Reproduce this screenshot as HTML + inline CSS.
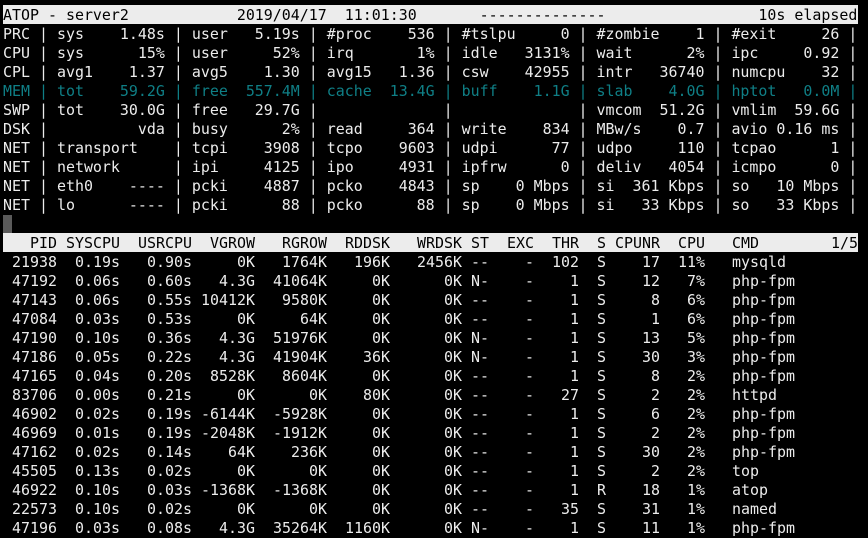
<!DOCTYPE html>
<html><head><meta charset="utf-8"><style>
html,body{margin:0;padding:0;background:#000;width:868px;height:538px;overflow:hidden}
body{position:relative;font-family:"DejaVu Sans Mono","Liberation Mono",monospace;font-size:14.95px;color:#ececec}
.l{position:absolute;left:3px;height:19px;line-height:19px;padding-top:1px;white-space:pre}
.bar{position:absolute;left:3px;width:855px;height:19px;background:#ececec}
.t{color:#0f7f86}
.r{position:absolute;left:0;width:868px;height:19px;line-height:19px}
.r i{font-style:normal;position:absolute;top:1px;white-space:pre}
.a{right:811px}.b{right:748px}.c{right:676px}.d{right:613px}.e{right:541px}.f{right:478px}.g{right:406px}
.h{left:471px}.j{right:334px}.k{right:289px}.m{left:597px}.n{right:208px}.o{right:163px}.p{left:732px}
.blk{color:#000}
</style></head><body>
<div class="bar" style="top:5px"></div>
<div class="l blk" style="top:5px">ATOP - server2            2019/04/17  11:01:30       --------------                 10s elapsed</div>
<div class="l" style="top:24px">PRC | sys    1.48s | user   5.19s | #proc    536 | #tslpu     0 | #zombie    1 | #exit     26 |</div>
<div class="l" style="top:43px">CPU | sys      15% | user     52% | irq       1% | idle   3131% | wait      2% | ipc     0.92 |</div>
<div class="l" style="top:62px">CPL | avg1    1.37 | avg5    1.30 | avg15   1.36 | csw    42955 | intr   36740 | numcpu    32 |</div>
<div class="l t" style="top:81px">MEM | tot    59.2G | free  557.4M | cache  13.4G | buff    1.1G | slab    4.0G | hptot   0.0M |</div>
<div class="l" style="top:100px">SWP | tot    30.0G | free   29.7G |              |              | vmcom  51.2G | vmlim  59.6G |</div>
<div class="l" style="top:119px">DSK |          vda | busy      2% | read     364 | write    834 | MBw/s    0.7 | avio 0.16 ms |</div>
<div class="l" style="top:138px">NET | transport    | tcpi    3908 | tcpo    9603 | udpi      77 | udpo     110 | tcpao      1 |</div>
<div class="l" style="top:157px">NET | network      | ipi     4125 | ipo     4931 | ipfrw      0 | deliv   4054 | icmpo      0 |</div>
<div class="l" style="top:176px">NET | eth0    ---- | pcki    4887 | pcko    4843 | sp    0 Mbps | si  361 Kbps | so   10 Mbps |</div>
<div class="l" style="top:195px">NET | lo      ---- | pcki      88 | pcko      88 | sp    0 Mbps | si   33 Kbps | so   33 Kbps |</div>
<div style="position:absolute;left:3px;top:215px;width:9px;height:18px;background:#5a5a5a"></div>
<div class="bar" style="top:233px"></div>
<div class="r blk" style="top:233px"><i class="a">PID</i><i class="b">SYSCPU</i><i class="c">USRCPU</i><i class="d">VGROW</i><i class="e">RGROW</i><i class="f">RDDSK</i><i class="g">WRDSK</i><i class="h">ST</i><i class="j">EXC</i><i class="k">THR</i><i class="m">S</i><i class="n">CPUNR</i><i class="o">CPU</i><i class="p">CMD</i><i style="right:10px">1/5</i></div>
<div class="r" style="top:252px"><i class="a">21938</i><i class="b">0.19s</i><i class="c">0.90s</i><i class="d">0K</i><i class="e">1764K</i><i class="f">196K</i><i class="g">2456K</i><i class="h">--</i><i class="j">-</i><i class="k">102</i><i class="m">S</i><i class="n">17</i><i class="o">11%</i><i class="p">mysqld</i></div>
<div class="r" style="top:271px"><i class="a">47192</i><i class="b">0.06s</i><i class="c">0.60s</i><i class="d">4.3G</i><i class="e">41064K</i><i class="f">0K</i><i class="g">0K</i><i class="h">N-</i><i class="j">-</i><i class="k">1</i><i class="m">S</i><i class="n">12</i><i class="o">7%</i><i class="p">php-fpm</i></div>
<div class="r" style="top:290px"><i class="a">47143</i><i class="b">0.06s</i><i class="c">0.55s</i><i class="d">10412K</i><i class="e">9580K</i><i class="f">0K</i><i class="g">0K</i><i class="h">--</i><i class="j">-</i><i class="k">1</i><i class="m">S</i><i class="n">8</i><i class="o">6%</i><i class="p">php-fpm</i></div>
<div class="r" style="top:309px"><i class="a">47084</i><i class="b">0.03s</i><i class="c">0.53s</i><i class="d">0K</i><i class="e">64K</i><i class="f">0K</i><i class="g">0K</i><i class="h">--</i><i class="j">-</i><i class="k">1</i><i class="m">S</i><i class="n">1</i><i class="o">6%</i><i class="p">php-fpm</i></div>
<div class="r" style="top:328px"><i class="a">47190</i><i class="b">0.10s</i><i class="c">0.36s</i><i class="d">4.3G</i><i class="e">51976K</i><i class="f">0K</i><i class="g">0K</i><i class="h">N-</i><i class="j">-</i><i class="k">1</i><i class="m">S</i><i class="n">13</i><i class="o">5%</i><i class="p">php-fpm</i></div>
<div class="r" style="top:347px"><i class="a">47186</i><i class="b">0.05s</i><i class="c">0.22s</i><i class="d">4.3G</i><i class="e">41904K</i><i class="f">36K</i><i class="g">0K</i><i class="h">N-</i><i class="j">-</i><i class="k">1</i><i class="m">S</i><i class="n">30</i><i class="o">3%</i><i class="p">php-fpm</i></div>
<div class="r" style="top:366px"><i class="a">47165</i><i class="b">0.04s</i><i class="c">0.20s</i><i class="d">8528K</i><i class="e">8604K</i><i class="f">0K</i><i class="g">0K</i><i class="h">--</i><i class="j">-</i><i class="k">1</i><i class="m">S</i><i class="n">8</i><i class="o">2%</i><i class="p">php-fpm</i></div>
<div class="r" style="top:385px"><i class="a">83706</i><i class="b">0.00s</i><i class="c">0.21s</i><i class="d">0K</i><i class="e">0K</i><i class="f">80K</i><i class="g">0K</i><i class="h">--</i><i class="j">-</i><i class="k">27</i><i class="m">S</i><i class="n">2</i><i class="o">2%</i><i class="p">httpd</i></div>
<div class="r" style="top:404px"><i class="a">46902</i><i class="b">0.02s</i><i class="c">0.19s</i><i class="d">-6144K</i><i class="e">-5928K</i><i class="f">0K</i><i class="g">0K</i><i class="h">--</i><i class="j">-</i><i class="k">1</i><i class="m">S</i><i class="n">6</i><i class="o">2%</i><i class="p">php-fpm</i></div>
<div class="r" style="top:423px"><i class="a">46969</i><i class="b">0.01s</i><i class="c">0.19s</i><i class="d">-2048K</i><i class="e">-1912K</i><i class="f">0K</i><i class="g">0K</i><i class="h">--</i><i class="j">-</i><i class="k">1</i><i class="m">S</i><i class="n">2</i><i class="o">2%</i><i class="p">php-fpm</i></div>
<div class="r" style="top:442px"><i class="a">47162</i><i class="b">0.02s</i><i class="c">0.14s</i><i class="d">64K</i><i class="e">236K</i><i class="f">0K</i><i class="g">0K</i><i class="h">--</i><i class="j">-</i><i class="k">1</i><i class="m">S</i><i class="n">30</i><i class="o">2%</i><i class="p">php-fpm</i></div>
<div class="r" style="top:461px"><i class="a">45505</i><i class="b">0.13s</i><i class="c">0.02s</i><i class="d">0K</i><i class="e">0K</i><i class="f">0K</i><i class="g">0K</i><i class="h">--</i><i class="j">-</i><i class="k">1</i><i class="m">S</i><i class="n">2</i><i class="o">2%</i><i class="p">top</i></div>
<div class="r" style="top:480px"><i class="a">46922</i><i class="b">0.10s</i><i class="c">0.03s</i><i class="d">-1368K</i><i class="e">-1368K</i><i class="f">0K</i><i class="g">0K</i><i class="h">--</i><i class="j">-</i><i class="k">1</i><i class="m">R</i><i class="n">18</i><i class="o">1%</i><i class="p">atop</i></div>
<div class="r" style="top:499px"><i class="a">22573</i><i class="b">0.10s</i><i class="c">0.02s</i><i class="d">0K</i><i class="e">0K</i><i class="f">0K</i><i class="g">0K</i><i class="h">--</i><i class="j">-</i><i class="k">35</i><i class="m">S</i><i class="n">31</i><i class="o">1%</i><i class="p">named</i></div>
<div class="r" style="top:518px"><i class="a">47196</i><i class="b">0.03s</i><i class="c">0.08s</i><i class="d">4.3G</i><i class="e">35264K</i><i class="f">1160K</i><i class="g">0K</i><i class="h">N-</i><i class="j">-</i><i class="k">1</i><i class="m">S</i><i class="n">11</i><i class="o">1%</i><i class="p">php-fpm</i></div>
</body></html>
